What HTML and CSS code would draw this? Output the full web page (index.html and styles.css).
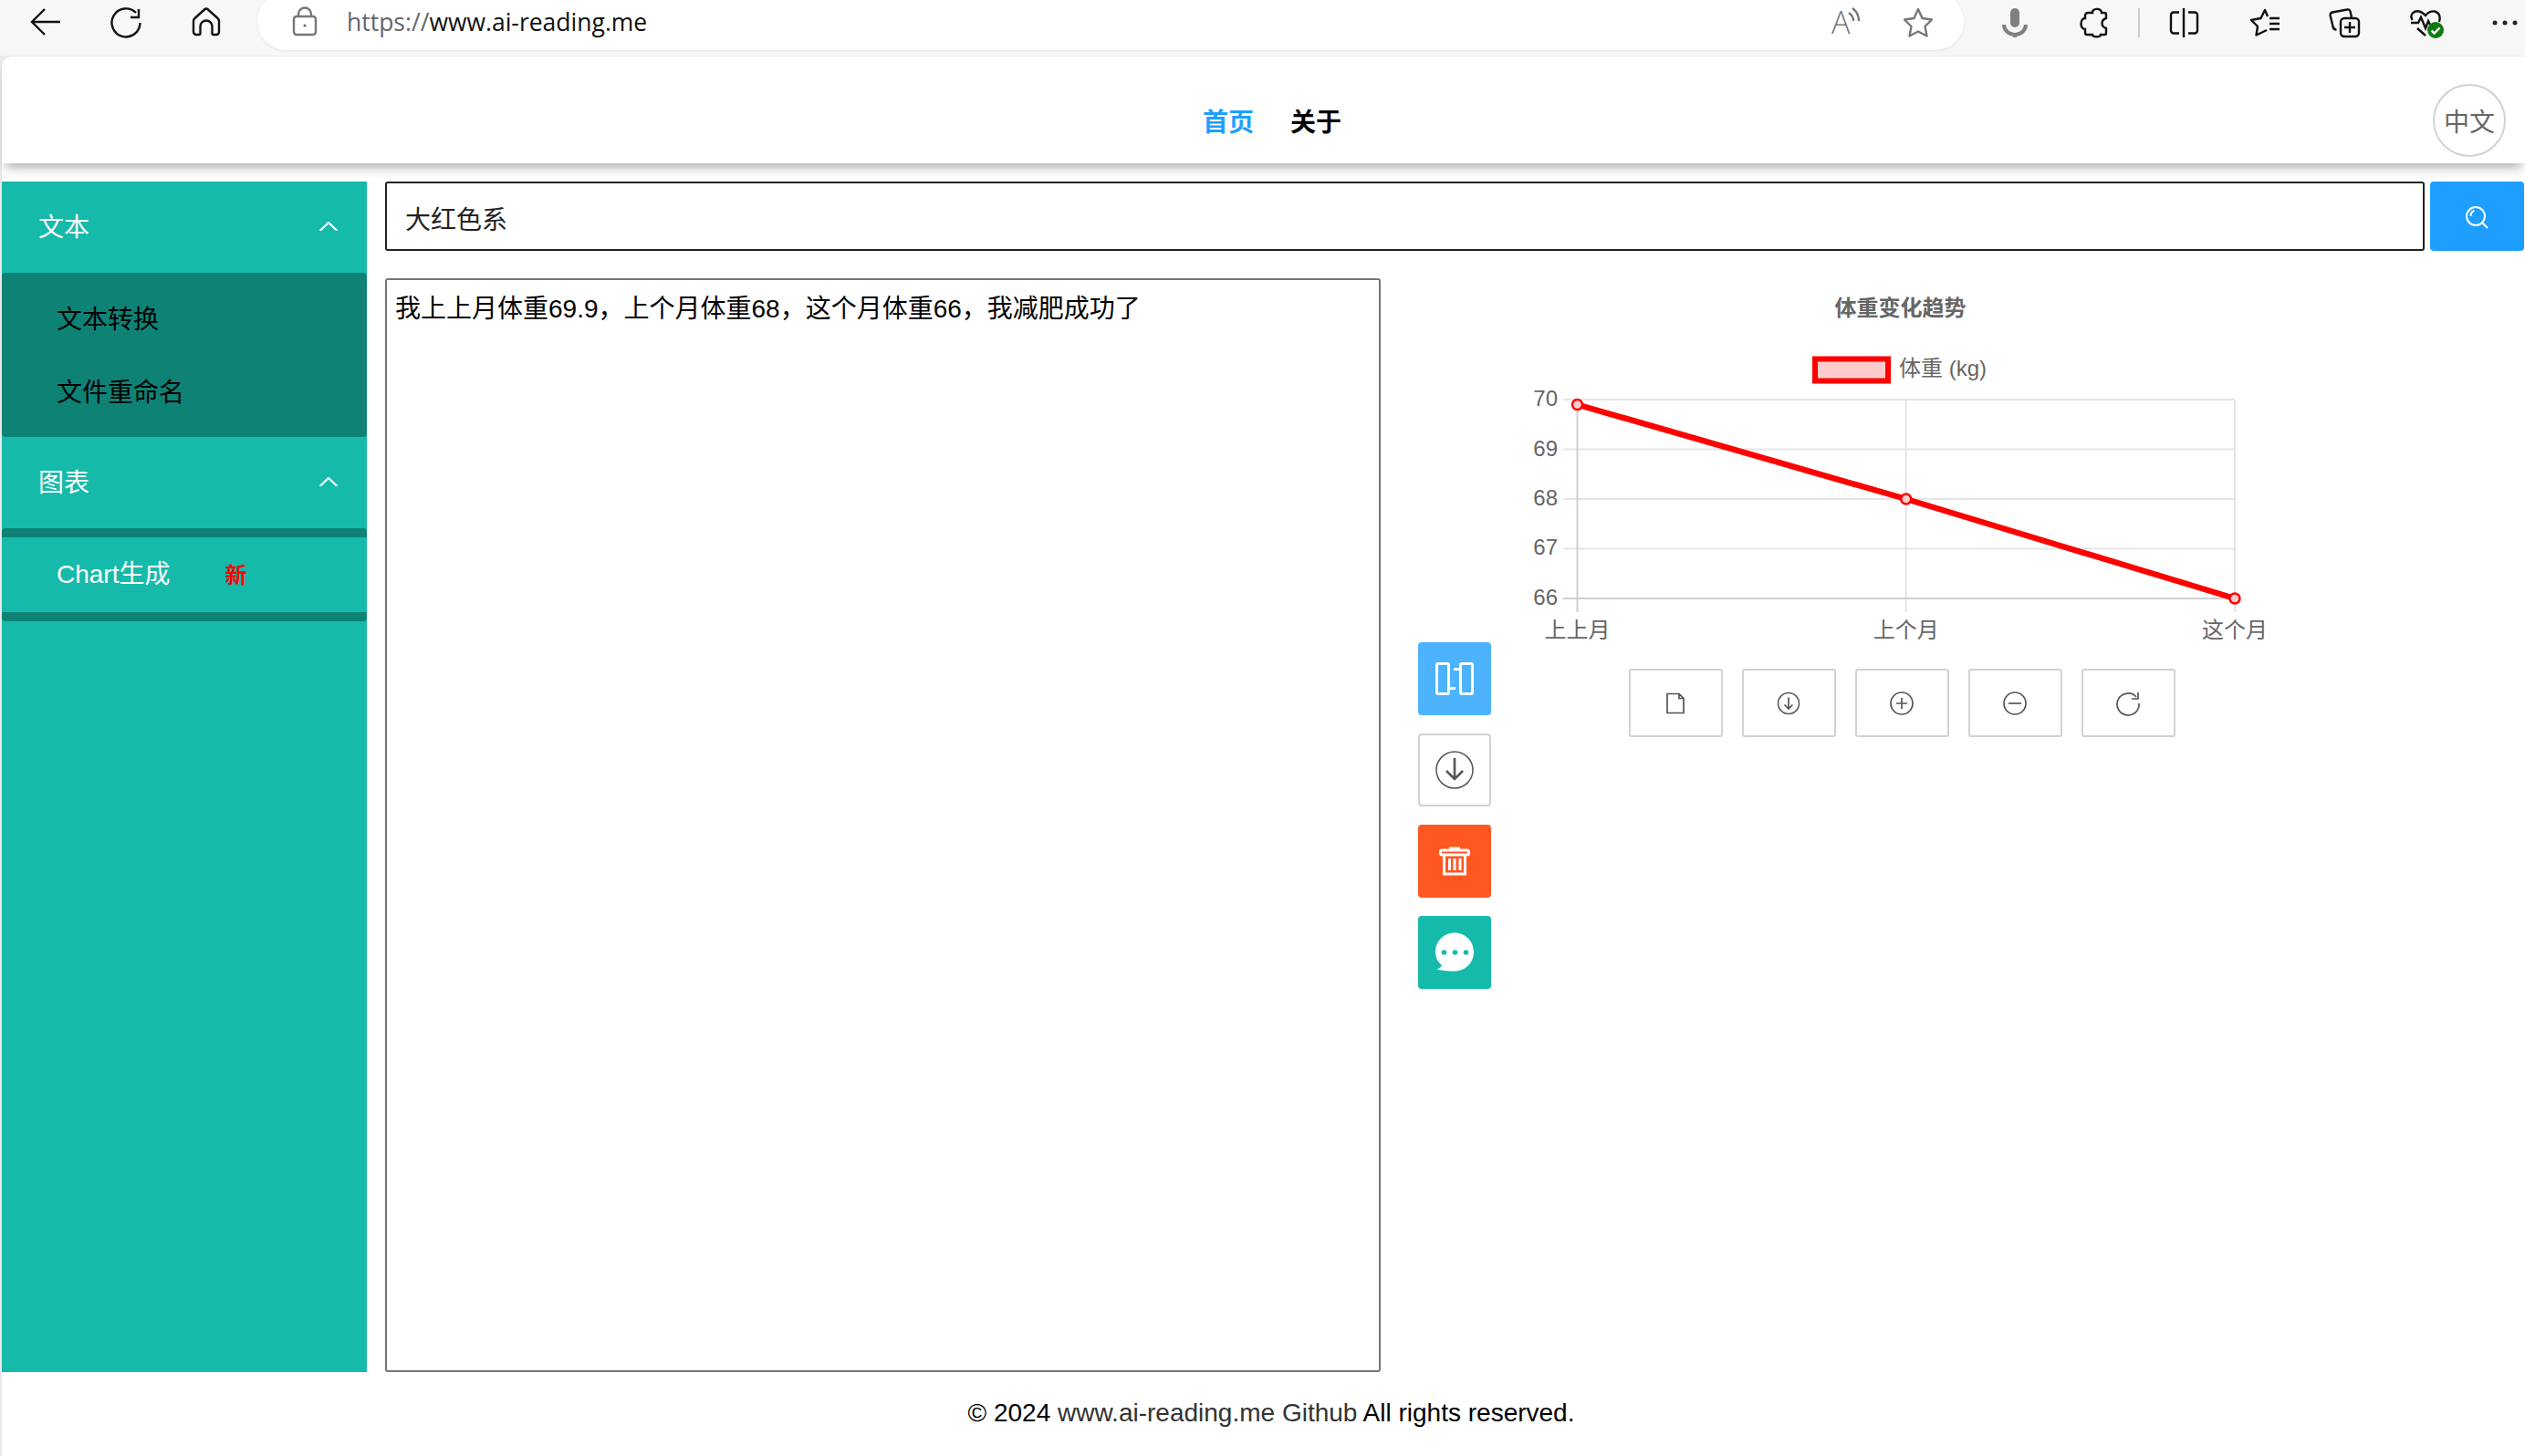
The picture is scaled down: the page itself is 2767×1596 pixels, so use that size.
FILE: index.html
```html
<!DOCTYPE html>
<html lang="zh">
<head>
<meta charset="utf-8">
<title>AI Reading</title>
<link rel="stylesheet" href="styles.css">
</head>
<body>
<div class="toolbar">
  <svg class="ico ico-back" viewBox="0 0 48 48"><path d="M10 24H41M24 10L10 24L24 38"/></svg>
  <svg class="ico ico-nav" viewBox="0 0 48 48"><path d="M35 14A15.5 15.5 0 1 0 39.5 25M38 10V19H29"/></svg>
  <svg class="ico ico-nav" viewBox="0 0 48 48"><path d="M22 10.5a3 3 0 0 1 4 0L36.5 20a4 4 0 0 1 1.5 3V35a3 3 0 0 1-3 3H32a1.500 1.500 0 0 1-1.500-1.500V29a6.500 6.500 0 0 0-13 0v7.500A1.500 1.500 0 0 1 16 38H13a3 3 0 0 1-3-3V23a4 4 0 0 1 1.500-3z"/></svg>
  <div class="address">
    <svg class="ico ico-gray ico-lock" viewBox="0 0 48 48"><rect x="12" y="18" width="24" height="20" rx="3"/><path d="M17 18V15.500a7 7 0 0 1 14 0V18"/><circle class="dot-gray" cx="24" cy="28" r="1.600"/></svg>
    <div class="url"><span class="url-scheme">https://</span>www.ai-reading.me</div>
    <svg class="ico ico-gray ico-read" viewBox="0 0 48 48"><text class="read-a" x="9" y="37">A</text><path d="M28 14c3 2 5 5 5 9M32 9c4 3 7 8 7 14"/></svg>
    <svg class="ico ico-gray ico-star" viewBox="0 0 48 48"><path stroke-linejoin="round" d="M24 10L28.500 20L39 21.500L31.500 29L33.500 39.500L24 34.500L14.500 39.500L16.500 29L9 21.500L19.500 20Z"/></svg>
  </div>
  <svg class="ico ico-mic" viewBox="0 0 48 48"><rect class="fill-gray" x="19" y="9" width="10" height="21" rx="5"/><path class="mic-line" d="M12 27a12 11 0 0 0 24 0M24 38V41"/></svg>
  <svg class="ico ico-puzzle" viewBox="0 0 48 48"><path d="M22 14c-1-5 10-6 10 0h3a2 2 0 0 1 2 2v4c-6 2-6 9 0 11v5a2 2 0 0 1-2 2h-4c0 3-9 3-9 0h-6a2 2 0 0 1-2-2v-4c-6 0-6-12 0-12v-3a3 3 0 0 1 3-3z"/></svg>
  <div class="divider"></div>
  <svg class="ico ico-split" viewBox="0 0 48 48"><path d="M19 13.500H13a3 3 0 0 0-3 3V33.500a3 3 0 0 0 3 3h6M29 13.500h7a3 3 0 0 1 3 3V33.500a3 3 0 0 1-3 3h-7M24 9V41"/></svg>
  <svg class="ico ico-nav2" viewBox="0 0 48 48"><path stroke-linejoin="round" d="M27 18L24 11L19.500 20L9 22L16 29L14.500 38.500L26 33M29 20H40M29 26H40M29 32H40"/></svg>
  <svg class="ico ico-nav3" viewBox="0 0 48 48"><rect x="19" y="20" width="20" height="20" rx="4"/><path d="M29 24V36M23 30H35M31 19L29.500 12.500a3 3 0 0 0-3.500-2L10 13.500a3 3 0 0 0-2.400 3.500L10.500 29a4 4 0 0 0 4 3.500"/></svg>
  <svg class="ico ico-nav3" viewBox="0 0 48 48"><path d="M9.500 22C6 15 12 11.500 17 12.500C20 13 22.500 15.500 24 17C26 14.500 30 12 34 12.500C39 13.500 41 19 39 24M8 25H16L19 19L24 31L27 23L29 27M15 31L24 39"/><circle class="badge" cx="35" cy="33" r="9"/><path class="badge-check" d="M30.500 33.500L33.500 36.500L39.500 30.500"/></svg>
  <svg class="ico ico-more" viewBox="0 0 48 48"><circle class="dot-black" cx="13" cy="25" r="2.500"/><circle class="dot-black" cx="24" cy="25" r="2.500"/><circle class="dot-black" cx="35" cy="25" r="2.500"/></svg>
</div>

<div class="page">
  <header class="header">
    <nav class="nav">
      <a class="nav-link nav-active">首页</a>
      <a class="nav-link">关于</a>
    </nav>
    <div class="lang">中文</div>
  </header>

  <main class="main">
    <aside class="sidebar">
      <div class="side-head"><span>文本</span><svg class="chev" viewBox="0 0 20 10"><path d="M0.500 10L10 1L19.500 10"/></svg></div>
      <div class="side-sub">
        <div class="side-item">文本转换</div>
        <div class="side-item">文件重命名</div>
      </div>
      <div class="side-head"><span>图表</span><svg class="chev" viewBox="0 0 20 10"><path d="M0.500 10L10 1L19.500 10"/></svg></div>
      <div class="side-sub">
        <div class="side-item side-current">Chart生成<span class="badge-new">新</span></div>
      </div>
    </aside>

    <section class="content">
      <div class="search">
        <input class="search-input" type="text" value="大红色系">
        <button class="search-btn"><svg class="search-ico" viewBox="0 0 30 30"><ellipse cx="13" cy="13" rx="10" ry="10"/><path d="M7.500 13a6 6 0 0 1 4-6M20 20L26 26" /></svg></button>
      </div>
      <div class="work">
        <textarea class="editor">我上上月体重69.9，上个月体重68，这个月体重66，我减肥成功了</textarea>
        <div class="actions">
          <button class="act act-blue"><svg class="act-ico" viewBox="0 0 80 80"><rect x="20.500" y="23.500" width="13" height="33" rx="1.500"/><rect x="46.500" y="23.500" width="13" height="33" rx="1.500"/><path d="M39 29.500H45M35 50.500H41"/></svg></button>
          <button class="act act-plain"><svg class="act-ico act-ico-dark" viewBox="0 0 76 76"><circle class="thin" cx="38" cy="38" r="20"/><path d="M38 25V47M29 39L38 48L47 39"/></svg></button>
          <button class="act act-orange"><svg class="act-ico" viewBox="0 0 80 80"><rect x="24.500" y="28" width="31" height="5" rx="1.500"/><path d="M28.500 33V54H51.500V33M34.500 37V50M40 37V50M46 37V50M34 26H46"/></svg></button>
          <button class="act act-teal"><svg class="act-ico" viewBox="0 0 80 80"><path class="chat" d="M40 18.500c11.600 0 21 9 21 21s-9.400 21-21 21c-6 0-14-.500-20-2 2.500-.500 5-2 6-4.500-4.500-3.500-7-8.500-7-14.500 0-12 9.400-21 21-21z"/><circle class="chat-dot" cx="28.500" cy="40" r="2.800"/><circle class="chat-dot" cx="40.500" cy="40" r="2.800"/><circle class="chat-dot" cx="52.500" cy="40" r="2.800"/></svg></button>
        </div>
        <div class="chart-panel">
          <svg class="chart" viewBox="0 0 860 415">
            <text class="chart-title" x="428.500" y="41">体重变化趋势</text>
            <rect class="legend-box" x="335" y="88.500" width="80" height="24"/>
            <text class="chart-text" x="427" y="106.500">体重 (kg)</text>
            <path class="grid" d="M59 133H795M59 187.500H795M59 242H795M59 296.500H795M434.750 133V366M795 133V366"/>
            <path class="axis" d="M74.500 133V366M59 351H795"/>
            <text class="chart-text tick-y" x="53" y="139.500">70</text>
            <text class="chart-text tick-y" x="53" y="194.500">69</text>
            <text class="chart-text tick-y" x="53" y="248.500">68</text>
            <text class="chart-text tick-y" x="53" y="302.500">67</text>
            <text class="chart-text tick-y" x="53" y="357.500">66</text>
            <text class="chart-text tick-x" x="74.500" y="394">上上月</text>
            <text class="chart-text tick-x" x="434.750" y="394">上个月</text>
            <text class="chart-text tick-x" x="795" y="394">这个月</text>
            <path class="series" d="M74.500 138.500L434.750 242L795 351"/>
            <circle class="point" cx="74.500" cy="138.500" r="5.500"/>
            <circle class="point" cx="434.750" cy="242" r="5.500"/>
            <circle class="point" cx="795" cy="351" r="5.500"/>
          </svg>
          <div class="chart-tools">
            <button class="tool"><svg class="tool-ico" viewBox="0 0 28 28"><path d="M5 3.500H18L23 8.500V24.500H5ZM18 3.500V8.500H23"/></svg></button>
            <button class="tool"><svg class="tool-ico" viewBox="0 0 28 28"><circle class="thin" cx="14" cy="14" r="11.500"/><path d="M14 7.500V20M9.500 15.500L14 20L18.500 15.500"/></svg></button>
            <button class="tool"><svg class="tool-ico" viewBox="0 0 28 28"><circle cx="14" cy="14" r="12"/><path d="M14 8V20M8 14H20"/></svg></button>
            <button class="tool"><svg class="tool-ico" viewBox="0 0 28 28"><circle cx="14" cy="14" r="12"/><path d="M7 14H21"/></svg></button>
            <button class="tool"><svg class="tool-ico" viewBox="0 0 28 28"><path d="M23 7A12 12 0 1 0 26 14M25 2V9H18"/></svg></button>
          </div>
        </div>
      </div>
    </section>
  </main>

  <footer class="footer"><p class="foot-text">© 2024 <a class="foot-link">www.ai-reading.me</a> <a class="foot-link">Github</a> All rights reserved.</p></footer>
</div>
</body>
</html>
```

FILE: styles.css
```css
* { box-sizing: border-box; }
html, body { margin: 0; height: 100%; }
body {
  width: 2767px;
  height: 1596px;
  overflow: hidden;
  background: #e9e9e9;
  font-family: "Liberation Sans", "Noto Sans CJK SC", sans-serif;
  font-size: 28px;
  color: #000;
}

/* browser chrome */
.toolbar {
  display: flex;
  align-items: flex-start;
  height: 62px;
  padding-left: 25px;
  margin-right: -3px;
  background: #f7f7f7;
  border-bottom: 1px solid #ececec;
}
.ico {
  flex: none;
  width: 48px;
  height: 48px;
  fill: none;
  stroke: #111;
  stroke-width: 2.4;
}
.ico-nav { margin-left: 41px; }
.ico-nav + .ico-nav { margin-left: 40px; }
.ico-nav2 { margin-left: 41px; }
.ico-nav3 { margin-left: 40px; }
.ico-more { margin-left: 39px; }
.ico-mic { margin-left: 32px; }
.ico-puzzle { margin-left: 39px; }
.ico-split { margin-left: 24px; }
.ico-gray { stroke: #777; }
.dot-gray { fill: #666; stroke: none; }
.dot-black { fill: #222; stroke: none; }
.fill-gray { fill: #808080; stroke: none; }
.mic-line { stroke: #808080; stroke-width: 4; }
.badge { fill: #107c10; stroke: none; }
.badge-check { stroke: #fff; stroke-width: 2.4; }
.read-a { font-family: "Open Sans", sans-serif; font-weight: 300; font-size: 34px; fill: #777; stroke: none; }
.divider { flex: none; width: 2px; height: 32px; margin: 9px 0 0 24px; background: #ccc; }

.address {
  flex: none;
  display: flex;
  align-items: center;
  width: 1870px;
  height: 63px;
  margin: -8px 0 0 32px;
  padding: 8px 26px 7px 28px;
  background: #fff;
  border-radius: 32px;
  box-shadow: 0 1px 3px rgba(0, 0, 0, .08);
}
.url {
  margin: 0 0 0 22px;
  font-family: "Open Sans", sans-serif;
  font-size: 26.5px;
  color: #111;
  white-space: nowrap;
}
.url-scheme { color: #666; }
.ico-read { margin-left: auto; }
.ico-star { margin-left: 32px; }

/* page */
.page {
  margin-left: 2px;
  height: 1534px;
  background: #fff;
  border-radius: 12px 0 0 0;
  display: flex;
  flex-direction: column;
}
.header {
  display: flex;
  align-items: center;
  flex: none;
  height: 117px;
  padding: 23px 21px 0 0;
  background: #fff;
  border-radius: 12px 0 0 0;
  box-shadow: 0 9px 12px -4px rgba(0, 0, 0, .3);
}
.nav {
  flex: 1;
  display: flex;
  justify-content: center;
  gap: 40px;
  padding-left: 120px;
}
.nav-link { font-weight: 700; color: #000; }
.nav-active { color: #1e9fff; }
.lang {
  width: 80px;
  height: 80px;
  border: 2px solid #d2d2d2;
  border-radius: 50%;
  background: #fff;
  color: #666;
  display: flex;
  align-items: center;
  justify-content: center;
  white-space: nowrap;
}

.main {
  flex: none;
  display: flex;
  gap: 20px;
  height: 1305px;
  margin-top: 20px;
}

/* sidebar */
.sidebar {
  flex: none;
  width: 400px;
  background: #16baaa;
  color: #fff;
}
.side-head {
  display: flex;
  align-items: center;
  justify-content: space-between;
  height: 100px;
  padding: 0 32px 4px 40px;
}
.chev { width: 20px; height: 10px; margin-top: 2px; fill: none; stroke: #fff; stroke-width: 2.2; }
.side-sub {
  padding: 10px 0;
  background: #0f8276;
  border-radius: 4px;
}
.side-item {
  display: flex;
  align-items: center;
  height: 80px;
  padding: 0 0 3px 60px;
  color: #000;
}
.side-current {
  height: 82px;
  padding-bottom: 7px;
  background: #16baaa;
  color: #fff;
}
.badge-new {
  margin: 4px 0 0 60px;
  font-size: 24px;
  font-weight: 700;
  color: #f00;
}

/* content */
.content {
  flex: 1;
  min-width: 0;
  padding-right: 1px;
}
.search {
  display: flex;
  gap: 6px;
  height: 76px;
}
.search-input {
  flex: 1;
  min-width: 0;
  height: 76px;
  padding: 3px 20px 0;
  border: 2px solid #222;
  border-radius: 3px;
  background: #fff;
  color: #222;
  font: inherit;
}
.search-btn {
  flex: none;
  width: 103px;
  height: 76px;
  padding: 3px 0 0;
  border: 0;
  border-radius: 4px;
  background: #1e9fff;
  display: flex;
  align-items: center;
  justify-content: center;
}
.search-ico { width: 30px; height: 30px; fill: none; stroke: #fff; stroke-width: 2; }

.work {
  display: flex;
  margin-top: 30px;
  height: 1199px;
}
.editor {
  flex: none;
  width: 1091px;
  height: 1199px;
  margin: 0;
  padding: 14px 9px 9px;
  border: 2px solid #767676;
  border-radius: 3px;
  font: inherit;
  line-height: 36px;
  color: #000;
  background: #fff;
  resize: none;
}
.actions {
  flex: none;
  display: flex;
  flex-direction: column;
  justify-content: center;
  gap: 20px;
  width: 80px;
  margin-left: 41px;
  padding-bottom: 21px;
}
.act {
  width: 80px;
  height: 80px;
  padding: 0;
  border: 0;
  border-radius: 4px;
  display: block;
}
.act-blue { background: #4db3ff; }
.act-orange { background: #ff5722; }
.act-teal { background: #16baaa; }
.act-plain { background: #fff; border: 2px solid #d2d2d2; }
.act-ico {
  display: block;
  width: 100%;
  height: 100%;
  fill: none;
  stroke: #fff;
  stroke-width: 3;
}
.act-ico-dark { stroke: #555; stroke-width: 2.6; }
.thin { stroke-width: 1.500; }
.chat { fill: #fff; stroke: none; }
.chat-dot { fill: #16baaa; stroke: none; }

/* chart */
.chart-panel {
  flex: none;
  width: 860px;
  margin-left: 20px;
}
.chart { display: block; width: 860px; height: 415px; }
.chart-title {
  font-size: 24px;
  font-weight: 700;
  fill: #666;
  text-anchor: middle;
}
.chart-text { font-size: 24px; fill: #666; }
.tick-y { text-anchor: end; }
.tick-x { text-anchor: middle; }
.legend-box { fill: #ffcccc; stroke: #f00; stroke-width: 6; }
.grid { fill: none; stroke: #e5e5e5; stroke-width: 2; }
.axis { fill: none; stroke: #cfcfcf; stroke-width: 2; }
.series { fill: none; stroke: #f00; stroke-width: 6.500; }
.point { fill: #ffcccc; stroke: #f00; stroke-width: 2.5; }
.chart-tools {
  display: flex;
  justify-content: center;
  gap: 21px;
  margin-top: 13px;
}
.tool {
  flex: none;
  width: 103px;
  height: 75px;
  padding: 0;
  background: #fff;
  border: 2px solid #d2d2d2;
  border-radius: 3px;
  display: flex;
  align-items: center;
  justify-content: center;
}
.tool-ico { width: 28px; height: 28px; fill: none; stroke: #555; stroke-width: 1.700; }

.footer {
  flex: 1;
  display: flex;
  align-items: center;
  justify-content: center;
  padding: 0 0 2px 17px;
}
.foot-text { margin: 0; white-space: pre; }
.foot-link { color: #333; }
```
